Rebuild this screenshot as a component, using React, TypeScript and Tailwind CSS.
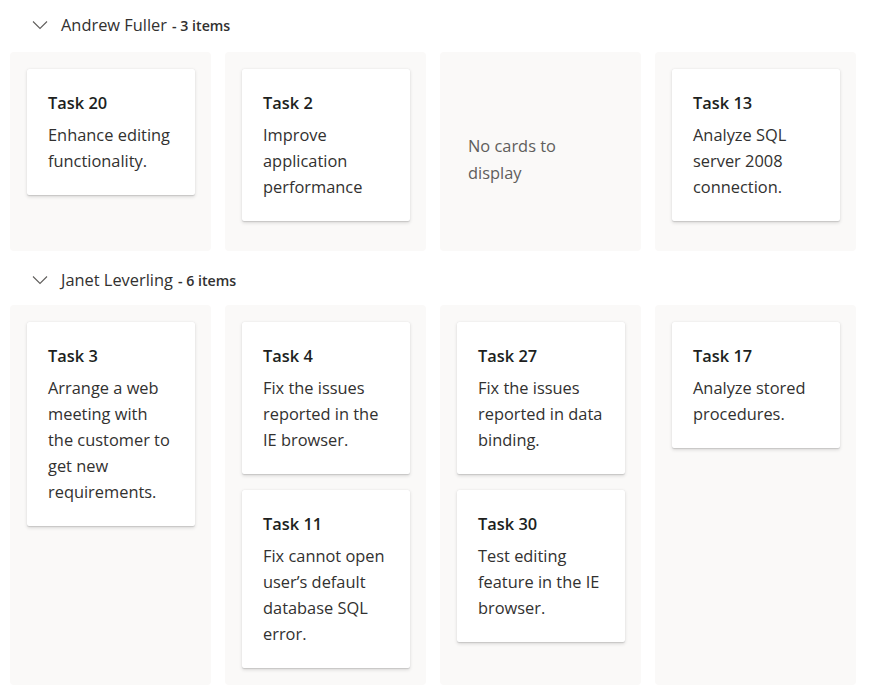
import React from "react";

type Card = { title: string; lines: string[] };
type Lane = { name: string; count: number; columns: (Card[] | null)[] };

const lanes: Lane[] = [
  {
    name: "Andrew Fuller",
    count: 3,
    columns: [
      [{ title: "Task 20", lines: ["Enhance editing", "functionality."] }],
      [{ title: "Task 2", lines: ["Improve", "application", "performance"] }],
      null,
      [{ title: "Task 13", lines: ["Analyze SQL", "server 2008", "connection."] }],
    ],
  },
  {
    name: "Janet Leverling",
    count: 6,
    columns: [
      [
        {
          title: "Task 3",
          lines: ["Arrange a web", "meeting with", "the customer to", "get new", "requirements."],
        },
      ],
      [
        { title: "Task 4", lines: ["Fix the issues", "reported in the", "IE browser."] },
        { title: "Task 11", lines: ["Fix cannot open", "user\u2019s default", "database SQL", "error."] },
      ],
      [
        { title: "Task 27", lines: ["Fix the issues", "reported in data", "binding."] },
        { title: "Task 30", lines: ["Test editing", "feature in the IE", "browser."] },
      ],
      [{ title: "Task 17", lines: ["Analyze stored", "procedures."] }],
    ],
  },
];

function Chevron() {
  return (
    <svg width="16" height="10" viewBox="0 0 16 10" className="shrink-0">
      <polyline points="1,1.5 8,8.5 15,1.5" fill="none" stroke="#605e5c" strokeWidth="1.1" />
    </svg>
  );
}

function KCard({ card }: { card: Card }) {
  return (
    <div className="bg-white rounded-[2px] shadow-[0_1.6px_3.6px_rgba(0,0,0,0.13),0_0.3px_0.9px_rgba(0,0,0,0.11)] pl-[21px] pr-[12px] pt-[22px] pb-[21px]">
      <div className="text-[16.4px] leading-[24px] font-semibold text-[#201f1e]">{card.title}</div>
      <div className="mt-[7px] text-[16.4px] leading-[26px] text-[#323130]">
        {card.lines.map((l, i) => (
          <div key={i} className="whitespace-nowrap">
            {l}
          </div>
        ))}
      </div>
    </div>
  );
}

export default function App() {
  return (
    <div
      className="w-[888px] h-[692px] bg-white overflow-hidden"
      style={{ fontFamily: '"Open Sans", "Noto Sans", sans-serif' }}
    >
      {lanes.map((lane, li) => (
        <div key={lane.name}>
          <div
            className={
              li === 0
                ? "flex items-center h-[26px] mt-[12px] mb-[14px] pl-[32px]"
                : "flex items-center h-[26px] mt-[16px] mb-[12px] pl-[32px]"
            }
          >
            <Chevron />
            <span className="ml-[13px] text-[16.4px] text-[#323130] leading-[26px]">{lane.name}</span>
            <span className="ml-[5px] text-[14.2px] font-semibold text-[#323130] leading-[26px] pt-[2px]">
              - {lane.count} items
            </span>
          </div>
          <div
            className={
              "ml-[10px] w-[846px] grid grid-cols-4 gap-[14px] " + (li === 0 ? "min-h-[199px]" : "")
            }
          >
            {lane.columns.map((col, ci) => (
              <div key={ci} className="bg-[#faf9f8] rounded-[4px] pl-[17px] pr-[16px] pt-[17px] pb-[17px]">
                {col ? (
                  <div className="flex flex-col gap-[16px]">
                    {col.map((c) => (
                      <KCard key={c.title} card={c} />
                    ))}
                  </div>
                ) : (
                  <div className="pt-[63px] pl-[11px] text-[16.4px] leading-[27px] text-[#605e5c]">
                    <div>No cards to</div>
                    <div>display</div>
                  </div>
                )}
              </div>
            ))}
          </div>
        </div>
      ))}
    </div>
  );
}
